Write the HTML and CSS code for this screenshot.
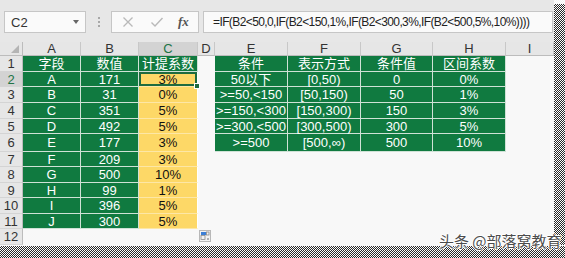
FILE: index.html
```html
<!DOCTYPE html>
<html lang="zh">
<head>
<meta charset="utf-8">
<title>Excel</title>
<link rel="stylesheet" href="styles.css">
</head>
<body>
<div class="frame">
  <div class="top">
    <div class="content">
      <div class="toolbar">
        <div class="namebox"><span>C2</span><span class="caret"></span></div>
        <div class="dots"><i></i><i></i><i></i></div>
        <div class="fbtns">
          <svg class="fb-x" width="12" height="12" viewBox="0 0 12 12"><path d="M1.5 1.5 L10.5 10.5 M10.5 1.5 L1.5 10.5" stroke="#b9b9b9" stroke-width="1.3" fill="none"/></svg>
          <svg class="fb-ok" width="14" height="12" viewBox="0 0 14 12"><path d="M1.5 6.5 L5 10 L12.5 2" stroke="#b9b9b9" stroke-width="1.4" fill="none"/></svg>
          <span class="fx">fx</span>
        </div>
        <div class="formula">=IF(B2&lt;50,0,IF(B2&lt;150,1%,IF(B2&lt;300,3%,IF(B2&lt;500,5%,10%))))</div>
      </div>
      <div class="sheet">
        <div class="corner"><span class="tri"></span></div>
        <div class="ch">A</div><div class="ch">B</div><div class="ch sel">C</div><div class="ch">D</div><div class="ch">E</div><div class="ch">F</div><div class="ch">G</div><div class="ch">H</div><div class="ch">I</div>

        <div class="rh">1</div>
        <div class="c g">字段</div><div class="c g">数值</div><div class="c g">计提系数</div><div class="c e"></div>
        <div class="c g">条件</div><div class="c g">表示方式</div><div class="c g">条件值</div><div class="c g">区间系数</div><div class="c e"></div>

        <div class="rh sel">2</div>
        <div class="c g">A</div><div class="c g">171</div><div class="c y active">3%<span class="handle"></span></div><div class="c e"></div>
        <div class="c g">50以下</div><div class="c g">[0,50)</div><div class="c g">0</div><div class="c g">0%</div><div class="c e"></div>

        <div class="rh">3</div>
        <div class="c g">B</div><div class="c g">31</div><div class="c y">0%</div><div class="c e"></div>
        <div class="c g">&gt;=50,&lt;150</div><div class="c g">[50,150)</div><div class="c g">50</div><div class="c g">1%</div><div class="c e"></div>

        <div class="rh">4</div>
        <div class="c g">C</div><div class="c g">351</div><div class="c y">5%</div><div class="c e"></div>
        <div class="c g">&gt;=150,&lt;300</div><div class="c g">[150,300)</div><div class="c g">150</div><div class="c g">3%</div><div class="c e"></div>

        <div class="rh">5</div>
        <div class="c g">D</div><div class="c g">492</div><div class="c y">5%</div><div class="c e"></div>
        <div class="c g">&gt;=300,&lt;500</div><div class="c g">[300,500)</div><div class="c g">300</div><div class="c g">5%</div><div class="c e"></div>

        <div class="rh">6</div>
        <div class="c g">E</div><div class="c g">177</div><div class="c y">3%</div><div class="c e"></div>
        <div class="c g">&gt;=500</div><div class="c g">[500,∞)</div><div class="c g">500</div><div class="c g">10%</div><div class="c e"></div>

        <div class="rh">7</div>
        <div class="c g">F</div><div class="c g">209</div><div class="c y">3%</div><div class="c e"></div>
        <div class="c e"></div><div class="c e"></div><div class="c e"></div><div class="c e"></div><div class="c e"></div>

        <div class="rh">8</div>
        <div class="c g">G</div><div class="c g">500</div><div class="c y">10%</div><div class="c e"></div>
        <div class="c e"></div><div class="c e"></div><div class="c e"></div><div class="c e"></div><div class="c e"></div>

        <div class="rh">9</div>
        <div class="c g">H</div><div class="c g">99</div><div class="c y">1%</div><div class="c e"></div>
        <div class="c e"></div><div class="c e"></div><div class="c e"></div><div class="c e"></div><div class="c e"></div>

        <div class="rh">10</div>
        <div class="c g">I</div><div class="c g">396</div><div class="c y">5%</div><div class="c e"></div>
        <div class="c e"></div><div class="c e"></div><div class="c e"></div><div class="c e"></div><div class="c e"></div>

        <div class="rh">11</div>
        <div class="c g">J</div><div class="c g">300</div><div class="c y">5%</div><div class="c e"></div>
        <div class="c e"></div><div class="c e"></div><div class="c e"></div><div class="c e"></div><div class="c e"></div>

        <div class="rh">12</div>
        <div class="c e"></div><div class="c e"></div><div class="c e"></div><div class="c e"></div>
        <div class="c e"></div><div class="c e"></div><div class="c e"></div><div class="c e"></div><div class="c e"></div>
      </div>
    </div>
    <div class="edge-r"></div>
  </div>
  <div class="edge-b"></div>

  <svg class="paste" width="12" height="12" viewBox="0 0 12 12">
    <rect x="0.5" y="0.5" width="11" height="11" fill="#f2f2f2" stroke="#b8b8b8"/>
    <rect x="2" y="2" width="5" height="3" fill="#3c7fd6"/>
    <rect x="7.5" y="2" width="2.5" height="3" fill="none" stroke="#8a8a8a" stroke-width="0.8"/>
    <rect x="2" y="5.5" width="4" height="4" fill="none" stroke="#8a8a8a" stroke-width="0.8"/>
    <circle cx="9" cy="9" r="1" fill="#9a9a9a"/>
  </svg>
  <div class="watermark">头条 @部落窝教育</div>
</div>
</body>
</html>
```

FILE: styles.css
```css
* { box-sizing: border-box; }
html, body {
  margin: 0;
  padding: 0;
  width: 565px;
  height: 258px;
  overflow: hidden;
  background: #f8f8f8;
  font-family: "Liberation Sans", "Noto Sans CJK SC", sans-serif;
}
.frame {
  position: relative;
  width: 565px;
  height: 258px;
  display: flex;
  flex-direction: column;
}
.top {
  display: flex;
  height: 245px;
}
.content {
  width: 554px;
  display: flex;
  flex-direction: column;
}
.edge-r {
  width: 11px;
  margin-top: 4px;
  background: repeating-conic-gradient(#2a2a2a 0 25%, #fdfdfd 0 50%) 0 0 / 2px 2px;
}
.edge-b {
  height: 12px;
  margin-top: 1px;
  background: repeating-conic-gradient(#2a2a2a 0 25%, #fdfdfd 0 50%) 0 0 / 2px 2px;
}

/* toolbar */
.toolbar {
  height: 42px;
  background: #e7e7e7;
  display: flex;
  align-items: flex-start;
  padding: 11px 0 0 4px;
}
.namebox {
  width: 82px;
  height: 22px;
  background: #fafafa;
  border: 1px solid #c6c6c6;
  display: flex;
  align-items: center;
  justify-content: space-between;
  padding: 0 6px 0 6px;
  font-size: 13px;
  color: #333;
}
.caret {
  width: 0;
  height: 0;
  border-left: 3.5px solid transparent;
  border-right: 3.5px solid transparent;
  border-top: 4px solid #666;
}
.dots {
  width: 25px;
  height: 22px;
  display: flex;
  flex-direction: column;
  align-items: center;
  justify-content: center;
  gap: 2px;
}
.dots i {
  display: block;
  width: 2px;
  height: 2px;
  background: #a8a8a8;
}
.fbtns {
  width: 88px;
  height: 22px;
  background: #fafafa;
  border: 1px solid #c6c6c6;
  display: flex;
  align-items: center;
  padding-left: 10px;
}
.fb-x { margin-right: 16px; }
.fb-ok { margin-right: 14px; }
.fx {
  font-family: "Liberation Serif", serif;
  font-style: italic;
  font-weight: bold;
  font-size: 13px;
  color: #555;
}
.formula {
  margin-left: 4px;
  width: 350px;
  height: 22px;
  background: #fafafa;
  border: 1px solid #c6c6c6;
  font-size: 12px;
  letter-spacing: -0.6px;
  color: #222;
  line-height: 20px;
  padding-left: 9px;
  white-space: nowrap;
  overflow: hidden;
}

/* sheet */
.sheet {
  display: grid;
  grid-template-columns: 23px 58px 58px 59px 17px 73px 73px 72px 73px 48px;
  grid-template-rows: 14px 16px 15px 16px 16px 15px 18px 15px 16px 15px 16px 15px 16px;
  font-size: 13px;
}
.corner {
  position: relative;
  background: #e6e6e6;
  border-right: 1px solid #bcbcbc;
  border-bottom: 1px solid #bcbcbc;
}
.tri {
  position: absolute;
  right: 3px;
  bottom: 2px;
  width: 0;
  height: 0;
  border-left: 8px solid transparent;
  border-bottom: 8px solid #b4b4b4;
}
.ch {
  background: #e6e6e6;
  color: #333;
  border-right: 1px solid #c8c8c8;
  border-bottom: 1px solid #bcbcbc;
  display: flex;
  align-items: center;
  justify-content: center;
  line-height: 1;
}
.ch.sel, .rh.sel {
  background: #d3d3d3;
  color: #217346;
}
.rh {
  background: #e6e6e6;
  color: #333;
  border-right: 1px solid #bcbcbc;
  border-bottom: 1px solid #d4d4d4;
  display: flex;
  align-items: center;
  justify-content: center;
  line-height: 1;
}
.c {
  display: flex;
  align-items: center;
  justify-content: center;
  line-height: 1;
  white-space: nowrap;
  border-right: 1px solid transparent;
  border-bottom: 1px solid transparent;
}
.g {
  background: #107a40;
  color: #fff;
  border-color: #cfe2d6;
}
.y {
  background: #fdd867;
  color: #111;
  border-right-color: #fff;
  border-bottom-color: #fde7a6;
}
.e {
  background: #f8f8f8;
}
.active {
  position: relative;
  box-shadow: inset 0 0 0 2px #1e6b3f;
}
.handle {
  position: absolute;
  right: -3px;
  bottom: -3px;
  width: 6px;
  height: 6px;
  background: #1e6b3f;
  border: 1px solid #fff;
}
.paste {
  position: absolute;
  left: 199px;
  top: 230px;
}
.watermark {
  position: absolute;
  left: 439px;
  top: 232px;
  font-family: "Noto Sans CJK SC", sans-serif;
  font-size: 15px;
  line-height: 17px;
  color: #4c4c4c;
  text-shadow: 1px 0 0 #fff, -1px 0 0 #fff, 0 1px 0 #fff, 0 -1px 0 #fff;
  white-space: nowrap;
}
```
